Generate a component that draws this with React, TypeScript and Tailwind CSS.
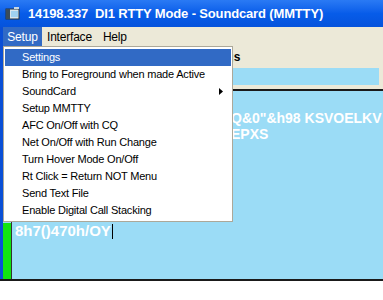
import React from 'react';

const menuItems = [
  'Settings',
  'Bring to Foreground when made Active',
  'SoundCard',
  'Setup MMTTY',
  'AFC On/Off with CQ',
  'Net On/Off with Run Change',
  'Turn Hover Mode On/Off',
  'Rt Click = Return NOT Menu',
  'Send Text File',
  'Enable Digital Call Stacking',
];

const AppIcon = () => (
  <svg width="16" height="14" viewBox="0 0 16 14" className="shrink-0">
    <rect x="1" y="2" width="13" height="10" fill="#d8e4ec" stroke="#27323c" strokeWidth="1" />
    <rect x="1" y="2" width="4" height="10" fill="#3a4c5c" />
    <rect x="6" y="4" width="7" height="6" fill="#9fd0f0" />
    <rect x="9" y="0" width="5" height="2" fill="#c6d6e2" />
  </svg>
);

const App: React.FC = () => {
  return (
    <div className="relative w-[383px] h-[300px] bg-white overflow-hidden" style={{ fontFamily: '"Liberation Sans", Arial, sans-serif' }}>
      <div className="flex flex-col h-[281px] border-l-[3px] border-[#0a4fd6]">
        {/* title bar */}
        <div className="h-[27px] -ml-[3px] flex items-center gap-[7px] pl-[5px] bg-gradient-to-b from-[#2a7af4] via-[#075ce9] to-[#0553dc]">
          <AppIcon />
          <span className="text-white font-bold text-[13px] tracking-[-0.15px] whitespace-pre">14198.337  DI1 RTTY Mode - Soundcard (MMTTY)</span>
        </div>

        {/* menu bar */}
        <div className="h-[19px] flex items-stretch bg-[#ece9d8] text-[12px] tracking-[-0.2px] text-black">
          <div className="w-[39px] flex items-center justify-center bg-[#316ac5] text-white">Setup</div>
          <div className="px-[5px] flex items-center">Interface</div>
          <div className="px-[6px] flex items-center">Help</div>
        </div>

        {/* toolbar */}
        <div className="h-[22px] bg-[#ece9d8] flex items-center pl-[190px] text-[12px] font-bold text-black">
          Settings
        </div>
        <div className="h-[17px] bg-[#ece9d8] flex">
          <div className="flex-1 bg-[#9bdcf6] mr-[4px]" />
        </div>
        <div className="h-[4px] bg-[#ece9d8]" />
        <div className="h-[2px] bg-[#1a1a1a]" />

        {/* receive area */}
        <div className="flex-1 flex bg-[#9bdcf6]">
          <div className="w-[8px] flex flex-col">
            <div className="h-[132px]" />
            <div className="flex-1 bg-[#11e411]" />
          </div>
          <div className="w-[1px] bg-[#333]" />
          <div className="flex-1 flex flex-col text-white font-bold text-[14px] leading-[16px] pl-[3px]">
            <div className="h-[19px]" />
            <div className="pl-[216px] whitespace-nowrap">Q&amp;0"&amp;h98 KSVOELKV</div>
            <div className="pl-[216px]">EPXS</div>
            <div className="h-[81px]" />
            <div className="flex items-center text-[15px]">
              8h7()470h/OY<span className="inline-block w-[1px] h-[15px] bg-black ml-[1px]" />
            </div>
          </div>
        </div>
        <div className="h-[2px] bg-[#1a1a1a] -ml-[3px]" />
      </div>

      {/* dropdown menu */}
      <div className="absolute left-[3px] top-[46px] w-[230px] bg-white border border-[#aca899] py-[2px] px-[1px] text-[11px] tracking-[-0.2px] text-black">
        {menuItems.map((item, i) => (
          <div
            key={item}
            className={`h-[17px] flex items-center pl-[17px] pr-[8px] whitespace-nowrap ${i === 0 ? 'bg-[#316ac5] text-white' : ''}`}
          >
            <span className="flex-1">{item}</span>
            {item === 'SoundCard' && (
              <svg width="4" height="7" viewBox="0 0 4 7">
                <path d="M0 0 L4 3.5 L0 7 Z" fill="#000" />
              </svg>
            )}
          </div>
        ))}
      </div>
    </div>
  );
};

export default App;
